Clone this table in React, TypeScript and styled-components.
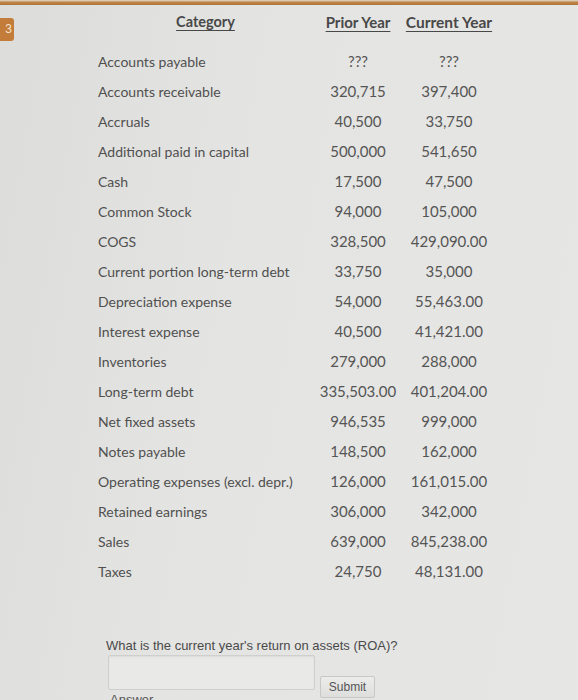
import React from "react";
import styled, { createGlobalStyle } from "styled-components";

const Global = createGlobalStyle`
  html, body { margin: 0; padding: 0; }
  body {
    width: 578px;
    height: 700px;
    overflow: hidden;
    background: linear-gradient(100deg, #dcdcda 0%, #e4e4e2 40%, #e6e6e4 100%);
    font-family: Lato, "Open Sans", sans-serif;
  }
`;

const Page = styled.div`
  position: relative;
  width: 578px;
  height: 700px;
  overflow: hidden;
`;

const TopStrip = styled.div`
  height: 5px;
  background: linear-gradient(180deg, #e2dccf 0%, #c08548 45%, #b0733a 100%);
`;

const Badge = styled.div`
  position: absolute;
  left: 0;
  top: 18px;
  width: 14px;
  height: 23px;
  background: #c47c3a;
  border-radius: 0 3px 3px 0;
  color: #f3e2cc;
  font-family: "Liberation Sans", Arial, sans-serif;
  font-size: 12px;
  line-height: 23px;
  text-align: right;
  padding-right: 2px;
  box-sizing: border-box;
`;

const Content = styled.div`
  padding: 7px 0 0 98px;
`;

const Table = styled.div`
  display: grid;
  grid-template-columns: 215px 90px 92px;
  grid-template-rows: 34px;
  grid-auto-rows: 30px;
  align-items: center;
  color: #555;
  font-size: 14px;
`;

const HeaderCell = styled.div<{ $size?: number }>`
  align-self: start;
  line-height: 20px;
  font-weight: 700;
  color: #484848;
  text-decoration: underline;
  text-underline-offset: 3px;
  text-align: center;
  white-space: nowrap;
  font-size: ${(p) => p.$size || 14.5}px;
`;

const Label = styled.div`
  white-space: nowrap;
  color: #505050;
`;

const Value = styled.div`
  text-align: center;
  white-space: nowrap;
  color: #555;
  font-size: 15px;
`;

const Question = styled.div`
  margin-top: 52px;
  padding-left: 8px;
  font-family: "Liberation Sans", Arial, sans-serif;
  font-size: 13px;
  line-height: 15px;
  color: #4a4a4a;
`;

const AnswerRow = styled.div`
  display: flex;
  align-items: flex-end;
  gap: 5px;
  margin-top: 2px;
  padding-left: 10px;
`;

const Input = styled.div`
  width: 207px;
  height: 35px;
  box-sizing: border-box;
  border: 1px solid #cfcfcd;
  border-radius: 2px;
  background: #e9e9e7;
  box-shadow: inset 0 1px 2px rgba(0,0,0,0.06);
`;

const Button = styled.div`
  width: 55px;
  height: 22px;
  box-sizing: border-box;
  border: 1px solid #c8c8c6;
  border-radius: 2px;
  background: linear-gradient(180deg, #ececea, #dededc);
  font-family: "Liberation Sans", Arial, sans-serif;
  font-size: 12px;
  color: #555;
  display: flex;
  align-items: center;
  justify-content: center;
  margin-bottom: -8px;
`;

const Cut = styled.div`
  margin-top: 2px;
  padding-left: 12px;
  font-family: "Liberation Sans", Arial, sans-serif;
  font-size: 13px;
  line-height: 15px;
  color: #555;
`;

const rows: [string, string, string][] = [
  ["Accounts payable", "???", "???"],
  ["Accounts receivable", "320,715", "397,400"],
  ["Accruals", "40,500", "33,750"],
  ["Additional paid in capital", "500,000", "541,650"],
  ["Cash", "17,500", "47,500"],
  ["Common Stock", "94,000", "105,000"],
  ["COGS", "328,500", "429,090.00"],
  ["Current portion long-term debt", "33,750", "35,000"],
  ["Depreciation expense", "54,000", "55,463.00"],
  ["Interest expense", "40,500", "41,421.00"],
  ["Inventories", "279,000", "288,000"],
  ["Long-term debt", "335,503.00", "401,204.00"],
  ["Net fixed assets", "946,535", "999,000"],
  ["Notes payable", "148,500", "162,000"],
  ["Operating expenses (excl. depr.)", "126,000", "161,015.00"],
  ["Retained earnings", "306,000", "342,000"],
  ["Sales", "639,000", "845,238.00"],
  ["Taxes", "24,750", "48,131.00"],
];

export default function App() {
  return (
    <Page>
      <Global />
      <TopStrip />
      <Badge>3</Badge>
      <Content>
        <Table>
          <HeaderCell>Category</HeaderCell>
          <HeaderCell $size={15}>Prior Year</HeaderCell>
          <HeaderCell $size={15.5}>Current Year</HeaderCell>
          {rows.map(([l, p, c]) => (
            <React.Fragment key={l}>
              <Label>{l}</Label>
              <Value>{p}</Value>
              <Value>{c}</Value>
            </React.Fragment>
          ))}
        </Table>
        <Question>What is the current year's return on assets (ROA)?</Question>
        <AnswerRow>
          <Input />
          <Button>Submit</Button>
        </AnswerRow>
        <Cut>Answer</Cut>
      </Content>
    </Page>
  );
}
